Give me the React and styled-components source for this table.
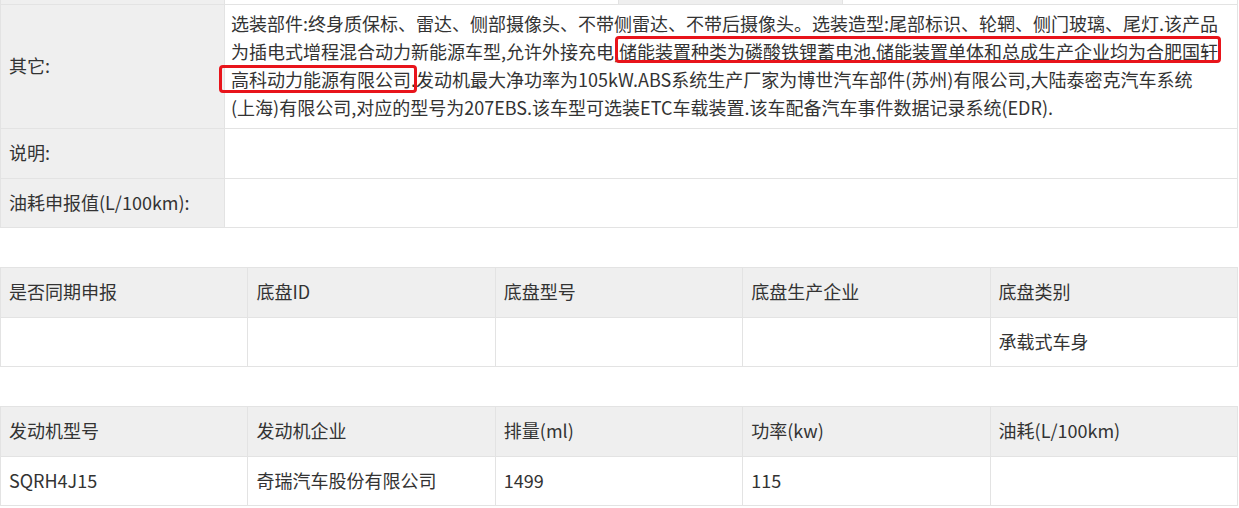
import React from "react";
import styled, { createGlobalStyle } from "styled-components";

const Global = createGlobalStyle`
  html, body { margin: 0; padding: 0; background: #fff; }
  body {
    font-family: "Noto Sans CJK SC", "Noto Sans", sans-serif;
    font-size: 18px;
    color: #333;
  }
`;

const Page = styled.div`
  width: 1238px;
  display: flex;
  flex-direction: column;
`;

const Table = styled.div`
  display: grid;
  grid-template-columns: ${(p) => p.$cols};
  border-left: 1px solid #e3e3e3;
  border-top: ${(p) => (p.$top ? "1px solid #e3e3e3" : "none")};
  margin-top: ${(p) => p.$gap || 0}px;
`;

const Cell = styled.div`
  background: ${(p) => (p.$head ? "#efefef" : "#fff")};
  border-right: 1px solid #e3e3e3;
  border-bottom: 1px solid #e3e3e3;
  height: ${(p) => (p.$h ? `${p.$h}px` : "auto")};
  padding: 0 8px ${(p) => (p.$h && p.$h < 10 ? 0 : 3)}px;
  display: flex;
  align-items: center;
  line-height: 28px;
  white-space: nowrap;
  box-sizing: border-box;
`;

const Block = styled.div`
  background: #fff;
  border-right: 1px solid #e3e3e3;
  border-bottom: 1px solid #e3e3e3;
  padding: 4px 6px 7px;
  line-height: 28px;
`;

const Line = styled.div`
  white-space: nowrap;
`;

const Mark = styled.span`
  position: relative;
  &::after {
    content: "";
    position: absolute;
    left: ${(p) => p.$l}px;
    right: ${(p) => p.$r}px;
    top: ${(p) => p.$t}px;
    bottom: ${(p) => p.$b}px;
    border: 3px solid #e8141b;
    border-radius: 4px;
    pointer-events: none;
  }
`;

const cols5 = "repeat(5, 1fr)";

function GridTable({ head, row }) {
  return (
    <Table $cols={cols5} $gap={39} $top>
      {head.map((h, i) => (
        <Cell key={"h" + i} $head $h={50}>
          {h}
        </Cell>
      ))}
      {row.map((c, i) => (
        <Cell key={"r" + i} $h={49}>
          {c}
        </Cell>
      ))}
    </Table>
  );
}

export default function App() {
  return (
    <Page>
      <Global />
      <Table $cols="224px 394px 224px 1fr">
        <Cell $head $h={5} />
        <Cell $h={5} />
        <Cell $head $h={5} />
        <Cell $h={5} />
      </Table>
      <Table $cols="224px 1fr">
        <Cell $head>其它:</Cell>
        <Block>
          <Line>
            选装部件:终身质保标、雷达、侧部摄像头、不带侧雷达、不带后摄像头。选装造型:尾部标识、轮辋、侧门玻璃、尾灯.该产品
          </Line>
          <Line>
            为插电式增程混合动力新能源车型,允许外接充电
            <Mark $l={1} $r={-3} $t={-2} $b={1}>
              ,储能装置种类为磷酸铁锂蓄电池,储能装置单体和总成生产企业均为合肥国轩
            </Mark>
          </Line>
          <Line>
            <Mark $l={-12} $r={-1} $t={-1} $b={-1}>
              高科动力能源有限公司.
            </Mark>
            发动机最大净功率为105kW.ABS系统生产厂家为博世汽车部件(苏州)有限公司,大陆泰密克汽车系统
          </Line>
          <Line>
            (上海)有限公司,对应的型号为207EBS.该车型可选装ETC车载装置.该车配备汽车事件数据记录系统(EDR).
          </Line>
        </Block>
        <Cell $head $h={50}>说明:</Cell>
        <Cell $h={50} />
        <Cell $head $h={49}>油耗申报值(L/100km):</Cell>
        <Cell $h={49} />
      </Table>
      <GridTable
        head={["是否同期申报", "底盘ID", "底盘型号", "底盘生产企业", "底盘类别"]}
        row={["", "", "", "", "承载式车身"]}
      />
      <GridTable
        head={["发动机型号", "发动机企业", "排量(ml)", "功率(kw)", "油耗(L/100km)"]}
        row={["SQRH4J15", "奇瑞汽车股份有限公司", "1499", "115", ""]}
      />
    </Page>
  );
}
